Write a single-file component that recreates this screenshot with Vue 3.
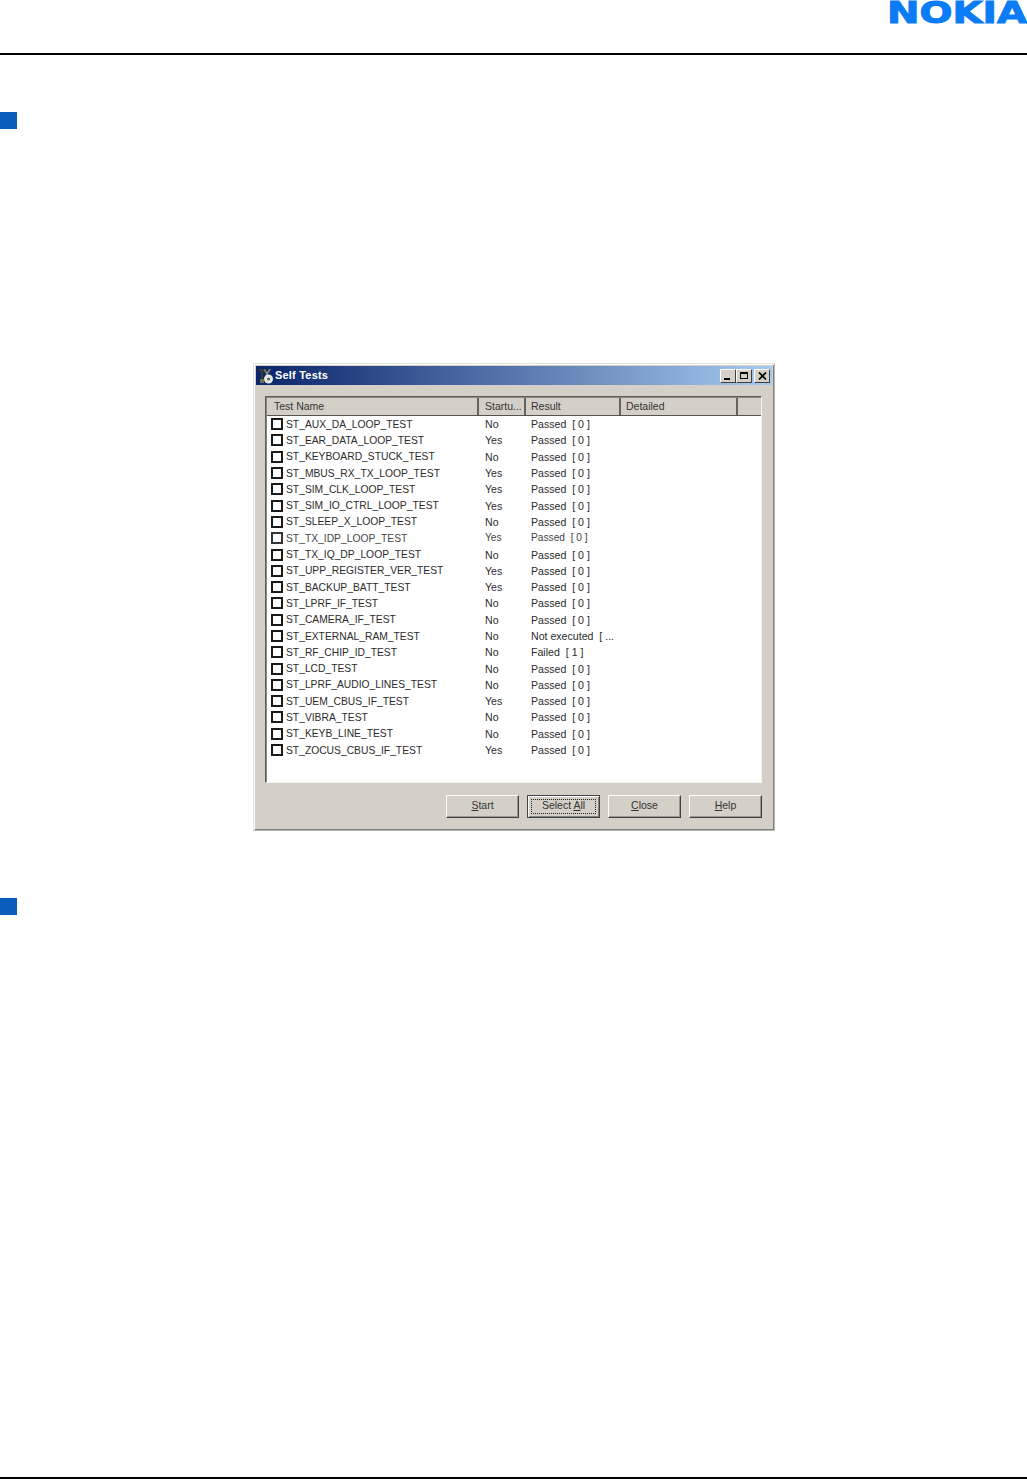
<template>
  <div class="page">
    <header class="top">
      <svg class="logo" width="138" height="24" viewBox="0 0 138 24">
        <text class="logo-text" x="-2" y="22.5" textLength="140" lengthAdjust="spacingAndGlyphs">NOKIA</text>
      </svg>
    </header>
    <div class="bullet bullet-first"></div>

    <div class="window">
      <div class="titlebar">
        <svg class="app-icon" width="16" height="16" viewBox="0 0 16 16">
          <path d="M1 1h6v2H5v10H3V3H1z" fill="#3a3a30" />
          <path d="M7 1l2 3 2-3h2l-3 5v4H8V6L6 2z" fill="#8a8468" />
          <circle cx="10.5" cy="11" r="4.5" fill="#e8e8e0" />
          <circle cx="10.5" cy="11" r="1.6" fill="#57705a" />
          <path d="M2 11h4v4H2z" fill="#6f6a52" />
        </svg>
        <span class="title-text">Self Tests</span>
        <div class="title-btns">
          <button class="tbtn"><span class="glyph-min"></span></button>
          <button class="tbtn"><span class="glyph-max"></span></button>
          <button class="tbtn tbtn-close">
            <svg width="9" height="8" viewBox="0 0 9 8"><path d="M1 0.5l7 7M8 0.5l-7 7" stroke="#000" stroke-width="1.7" fill="none" /></svg>
          </button>
        </div>
      </div>

      <div class="panel">
        <div class="list">
          <div class="list-head">
            <div class="hcell hc-name">Test Name</div>
            <div class="hcell hc-start">Startu...</div>
            <div class="hcell hc-result">Result</div>
            <div class="hcell hc-detail">Detailed</div>
            <div class="hcell hc-end"></div>
          </div>
          <div class="rows">
            <div v-for="t in tests" :key="t.name" class="row" :class="{ faded: t.faded }">
              <div class="name"><span class="check"></span><span class="name-text">{{ t.name }}</span></div>
              <div>{{ t.startup }}</div>
              <div>{{ t.result }}</div>
            </div>
          </div>
        </div>
        <div class="actions">
          <button class="btn"><u>S</u>tart</button>
          <button class="btn btn-focus"><span class="focus">Select <u>A</u>ll</span></button>
          <button class="btn"><u>C</u>lose</button>
          <button class="btn"><u>H</u>elp</button>
        </div>
      </div>
    </div>

    <div class="bullet bullet-second"></div>
    <div class="spacer"></div>
    <footer class="bottom"></footer>
  </div>
</template>

<script setup>
const passed = 'Passed  [ 0 ]'
const tests = [
  { name: 'ST_AUX_DA_LOOP_TEST', startup: 'No', result: passed },
  { name: 'ST_EAR_DATA_LOOP_TEST', startup: 'Yes', result: passed },
  { name: 'ST_KEYBOARD_STUCK_TEST', startup: 'No', result: passed },
  { name: 'ST_MBUS_RX_TX_LOOP_TEST', startup: 'Yes', result: passed },
  { name: 'ST_SIM_CLK_LOOP_TEST', startup: 'Yes', result: passed },
  { name: 'ST_SIM_IO_CTRL_LOOP_TEST', startup: 'Yes', result: passed },
  { name: 'ST_SLEEP_X_LOOP_TEST', startup: 'No', result: passed },
  { name: 'ST_TX_IDP_LOOP_TEST', startup: 'Yes', result: passed, faded: true },
  { name: 'ST_TX_IQ_DP_LOOP_TEST', startup: 'No', result: passed },
  { name: 'ST_UPP_REGISTER_VER_TEST', startup: 'Yes', result: passed },
  { name: 'ST_BACKUP_BATT_TEST', startup: 'Yes', result: passed },
  { name: 'ST_LPRF_IF_TEST', startup: 'No', result: passed },
  { name: 'ST_CAMERA_IF_TEST', startup: 'No', result: passed },
  { name: 'ST_EXTERNAL_RAM_TEST', startup: 'No', result: 'Not executed  [ ...' },
  { name: 'ST_RF_CHIP_ID_TEST', startup: 'No', result: 'Failed  [ 1 ]' },
  { name: 'ST_LCD_TEST', startup: 'No', result: passed },
  { name: 'ST_LPRF_AUDIO_LINES_TEST', startup: 'No', result: passed },
  { name: 'ST_UEM_CBUS_IF_TEST', startup: 'Yes', result: passed },
  { name: 'ST_VIBRA_TEST', startup: 'No', result: passed },
  { name: 'ST_KEYB_LINE_TEST', startup: 'No', result: passed },
  { name: 'ST_ZOCUS_CBUS_IF_TEST', startup: 'Yes', result: passed }
]
</script>

<style>
html, body { margin: 0; background: #fff; }
</style>

<style scoped>
.page { width: 1027px; height: 1479px; display: flex; flex-direction: column; background: #fff; overflow: hidden; font-family: "Liberation Sans", Arial, sans-serif; }

.top { height: 53px; flex: none; border-bottom: 2px solid #000; display: flex; justify-content: flex-end; }
.logo { display: block; flex: none; }
.logo-text { font-family: "DejaVu Sans", sans-serif; font-weight: 700; font-size: 30px; fill: #0a7cf5; stroke: #0a7cf5; stroke-width: 1px; }

.bullet { width: 17px; height: 17px; flex: none; background: #0a5cbd; }
.bullet-first { margin-top: 57px; }
.bullet-second { margin-top: 67px; }

.window { width: 522px; height: 468px; flex: none; margin-top: 234px; margin-left: 253px; box-sizing: border-box; background: #d4d0c8; border: 1px solid #b8b5ae; border-top-color: #e4e2dc; border-left-color: #e4e2dc; padding: 2px; display: flex; flex-direction: column; box-shadow: inset 1px 1px 0 #fff, inset -1px -1px 0 #808080; }

.titlebar { height: 19px; flex: none; display: flex; align-items: center; padding: 0 2px; background: linear-gradient(90deg, #0a246a, #a6caf0); color: #fff; }
.app-icon { flex: none; margin-right: 2px; }
.title-text { font-size: 11px; font-weight: 700; letter-spacing: 0.2px; margin-top: -2px; margin-left: -1px; }
.title-btns { margin-left: auto; display: flex; }
.tbtn { width: 16px; height: 14px; padding: 0; box-sizing: border-box; background: #d4d0c8; border: 1px solid; border-color: #fff #404040 #404040 #fff; display: flex; align-items: center; justify-content: center; }
.tbtn-close { margin-left: 2px; }
.glyph-min { width: 6px; height: 2px; background: #000; margin-top: 6px; margin-right: 2px; }
.glyph-max { width: 8px; height: 7px; box-sizing: border-box; border: 1px solid #000; border-top-width: 2px; }

.panel { flex: 1; display: flex; flex-direction: column; padding: 11px 10px 0 9px; min-height: 0; }

.list { height: 387px; flex: none; box-sizing: border-box; background: #fff; border: 1px solid; border-color: #5e5c58 #f4f3f0 #f4f3f0 #5e5c58; box-shadow: inset 1px 1px 0 #8a8780; display: flex; flex-direction: column; }
.list-head { height: 17px; flex: none; display: flex; margin-left: 1px; margin-top: 1px; background: #d4d0c8; border-bottom: 1px solid #55534f; }
.hcell { box-sizing: border-box; font-size: 10.5px; line-height: 16px; color: #333; padding-left: 7px; border-right: 2px solid #65635e; white-space: nowrap; overflow: hidden; }
.hc-name { width: 212px; }
.hc-start { width: 47px; padding-left: 6px; }
.hc-result { width: 95px; padding-left: 5px; }
.hc-detail { width: 117px; padding-left: 5px; }
.hc-end { flex: 1; border-right: none; }

.row { height: 16.3px; display: grid; grid-template-columns: 214px 46px 1fr; padding-left: 5px; align-items: center; font-size: 10.6px; line-height: 16px; color: #2b2b2b; white-space: pre; }
.row.faded { font-size: 10.2px; opacity: 0.88; }
.name { display: flex; align-items: center; font-size: 10.3px; }
.name-text { line-height: 14px; margin-top: 1px; }
.check { width: 12px; height: 12px; flex: none; box-sizing: border-box; border: 2px solid #1a1a1a; margin-right: 3px; }

.actions { display: flex; gap: 8px; justify-content: flex-end; margin-top: 12px; }
.btn { width: 73px; height: 23px; padding: 0 0 3px; box-sizing: border-box; font-family: inherit; font-size: 10.5px; color: #333; background: #d4d0c8; border: 1px solid; border-color: #fff #404040 #404040 #fff; box-shadow: inset -1px -1px 0 #9a9790; display: flex; align-items: center; justify-content: center; }
.btn-focus { border-color: #444; padding: 0; box-shadow: inset 1px 1px 0 #fff, inset -1px -1px 0 #808080; }
.focus { width: 65px; height: 15px; line-height: 11px; box-sizing: border-box; border: 1px dotted #222; text-align: center; display: block; }

.spacer { flex: 1; }
.bottom { height: 0; flex: none; border-top: 2px solid #000; }
</style>
